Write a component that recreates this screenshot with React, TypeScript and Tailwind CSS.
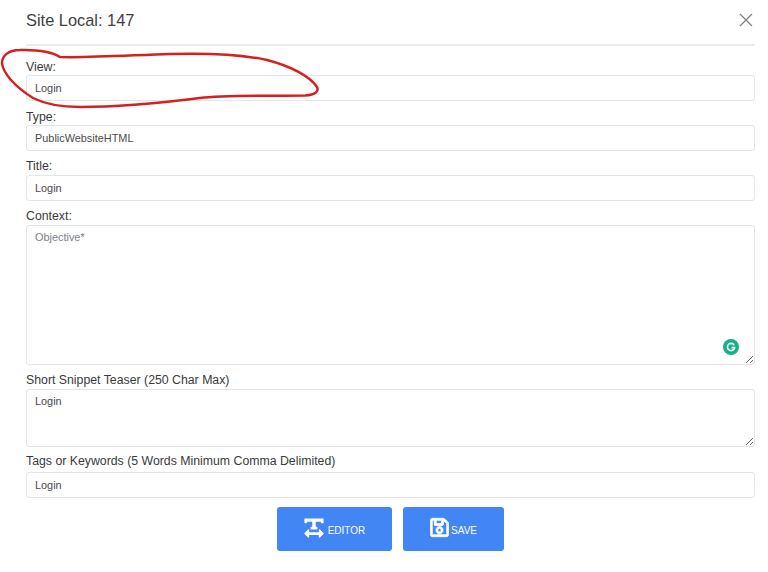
import { FaRegSave, FaTextWidth } from "react-icons/fa";

const Label = ({ text }: { text: string }) => (
  <label className="block h-[14px] text-[12.3px] leading-[14px] text-[#3a3a3a]">{text}</label>
);

const Input = ({ value }: { value: string }) => (
  <input
    readOnly
    value={value}
    className="block h-[26px] w-full rounded-[3px] border border-[#e2e5e9] bg-white px-2 pb-[1px] text-[10.9px] text-[#4a4a4a] outline-none"
  />
);

const App = () => {
  return (
    <div className="relative h-[572px] w-[768px] overflow-hidden bg-white font-['Liberation_Sans',Arial,sans-serif]">
      {/* Header */}
      <div className="ml-[26px] mr-[13px] flex h-[46px] items-start justify-between border-b-2 border-[#e9ecef]">
        <h5 className="mt-[11px] text-[16.4px] leading-[18px] text-[#3f3f3f]">Site Local: 147</h5>
        <svg className="mr-[2px] mt-[13px] h-[14px] w-[14px] text-[#7d7d7d]" viewBox="0 0 14 14" fill="none" stroke="currentColor" strokeWidth="1.2">
          <path d="M1 1l12 12M13 1L1 13" />
        </svg>
      </div>

      {/* Form */}
      <div className="ml-[26px] mr-[13px] mt-[14px] flex flex-col">
        <Label text="View:" />
        <div className="mt-[1px]"><Input value="Login" /></div>
        <div className="mt-[9px]"><Label text="Type:" /></div>
        <div className="mt-[1px]"><Input value="PublicWebsiteHTML" /></div>
        <div className="mt-[8px]"><Label text="Title:" /></div>
        <div className="mt-[2px]"><Input value="Login" /></div>
        <div className="mt-[8px]"><Label text="Context:" /></div>
        <div className="relative mt-[2px]">
          <textarea
            readOnly
            placeholder="Objective*"
            className="block h-[140px] w-full rounded-[3px] border border-[#e2e5e9] bg-white px-2 py-[3px] text-[10.9px] text-[#4a4a4a] outline-none placeholder:text-[#7b8188]"
          />
          <div className="absolute bottom-[10px] right-[16px] flex h-[16px] w-[16px] items-center justify-center rounded-full bg-[#15b088]">
            <svg className="h-[10px] w-[10px]" viewBox="0 0 10 10" fill="none" stroke="white" strokeWidth="1.6">
              <path d="M8.2 3.2A3.6 3.6 0 1 0 8.6 5.6H5.6" />
            </svg>
          </div>
        </div>
        <div className="mt-[8px]"><Label text="Short Snippet Teaser (250 Char Max)" /></div>
        <textarea
          readOnly
          defaultValue="Login"
          className="mt-[2px] block h-[58px] w-full rounded-[3px] border border-[#e2e5e9] bg-white px-2 py-[3px] text-[10.9px] text-[#4a4a4a] outline-none"
        />
        <div className="mt-[7px]"><Label text="Tags or Keywords (5 Words Minimum Comma Delimited)" /></div>
        <div className="mt-[4px]"><Input value="Login" /></div>
      </div>

      {/* Buttons */}
      <div className="ml-[277px] mt-[9px] flex gap-[11px]">
        <button className="flex h-[44px] w-[115px] items-center justify-center gap-[4px] rounded-[3px] bg-[#4285f4] text-[10px] text-white">
          <FaTextWidth className="mb-[3px] h-[22px] w-[20px]" />
          <span className="mt-[3px]">EDITOR</span>
        </button>
        <button className="flex h-[44px] w-[101px] items-center justify-center gap-[2px] rounded-[3px] bg-[#4285f4] text-[10px] text-white">
          <FaRegSave className="mb-[3px] h-[21px] w-[19px]" stroke="currentColor" strokeWidth={20} />
          <span className="mt-[3px]">SAVE</span>
        </button>
      </div>

      {/* Red hand-drawn annotation */}
      <svg className="pointer-events-none absolute left-0 top-0 h-[110px] w-[330px]" viewBox="0 0 330 110" fill="none" stroke="#d3211f" strokeWidth="2.5" strokeLinecap="round">
        <path d="M60 57C52 52 40 49.5 20 50C8 50 2 56 2 63C3 73 14 86 33 98C45 104 60 107 80 107C110 107 160 103 200 98C225 95 270 96 305 95.5C316 95 319 91 317 87C310 76 290 66 267 60C240 54 205 53 170 54C135 55 90 58 60 57" />
      </svg>
    </div>
  );
};

export default App;
